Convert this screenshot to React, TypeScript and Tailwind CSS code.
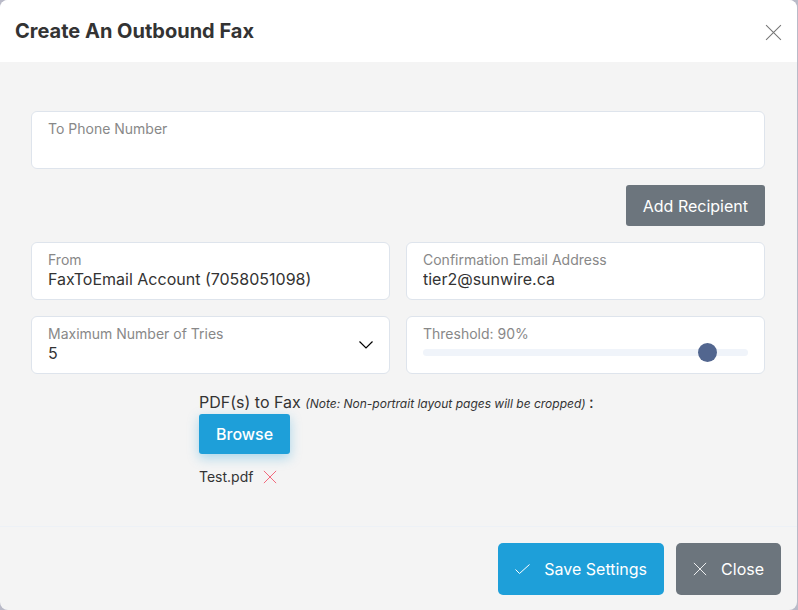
import { useState } from "react";
import type { ReactNode } from "react";

type FieldProps = {
  id: string;
  label: string;
  children: ReactNode;
};

function Field({ id, label, children }: FieldProps) {
  return (
    <div className="relative rounded-md border border-[#dee4ec] bg-white px-4 pt-2 pb-2.5">
      <label htmlFor={id} className="block text-sm leading-[18px] text-[#888888]">
        {label}
      </label>
      {children}
    </div>
  );
}

function CrossIcon({ className }: { className: string }) {
  return (
    <svg viewBox="0 0 16 16" fill="none" stroke="currentColor" className={className}>
      <path d="M1 1l14 14M15 1L1 15" />
    </svg>
  );
}

export default function App() {
  const [phone, setPhone] = useState("");
  const [from, setFrom] = useState("FaxToEmail Account (7058051098)");
  const [email, setEmail] = useState("tier2@sunwire.ca");
  const [tries, setTries] = useState("5");
  const [threshold, setThreshold] = useState(90);
  const [files, setFiles] = useState(["Test.pdf"]);

  const inputStyle =
    "block h-5 w-full bg-transparent text-base leading-5 text-[#333333] outline-none";

  return (
    <div className="min-h-screen bg-[#b9bac8] pr-px font-['Inter',sans-serif] text-[#333333]">
      <div className="flex min-h-screen flex-col overflow-hidden rounded-lg bg-[#f4f4f4]">
        <header className="flex items-center justify-between bg-white px-[15px] py-4">
          <h1 className="text-xl leading-[30px] font-bold">Create An Outbound Fax</h1>
          <button type="button" aria-label="Close dialog" className="mt-0.5 text-[#777777]">
            <CrossIcon className="size-[17px]" />
          </button>
        </header>

        <main className="grow px-8 pt-[49px] pb-8 pl-[31px]">
          <Field id="phone" label="To Phone Number">
            <input
              id="phone"
              value={phone}
              onChange={(e) => setPhone(e.target.value)}
              className={inputStyle}
            />
          </Field>

          <div className="my-4 flex justify-end">
            <button
              type="button"
              className="h-[41px] rounded-[3px] bg-[#6c757d] px-[17px] text-base text-white"
            >
              Add Recipient
            </button>
          </div>

          <div className="grid grid-cols-2 gap-4">
            <Field id="from" label="From">
              <input
                id="from"
                value={from}
                onChange={(e) => setFrom(e.target.value)}
                className={inputStyle}
              />
            </Field>
            <Field id="email" label="Confirmation Email Address">
              <input
                id="email"
                value={email}
                onChange={(e) => setEmail(e.target.value)}
                className={inputStyle}
              />
            </Field>
            <Field id="tries" label="Maximum Number of Tries">
              <select
                id="tries"
                value={tries}
                onChange={(e) => setTries(e.target.value)}
                className="block h-5 w-full appearance-none bg-transparent text-base leading-5 outline-none"
              >
                {["1", "2", "3", "4", "5"].map((n) => (
                  <option key={n}>{n}</option>
                ))}
              </select>
              <svg
                viewBox="0 0 14 8"
                fill="none"
                stroke="black"
                strokeWidth="1.2"
                className="pointer-events-none absolute inset-y-0 right-4 my-auto h-2 w-3.5"
              >
                <path d="M.5 .5L7 7L13.5 .5" />
              </svg>
            </Field>
            <Field id="threshold" label={`Threshold: ${threshold}%`}>
              <input
                id="threshold"
                type="range"
                value={threshold}
                onChange={(e) => setThreshold(Number(e.target.value))}
                className="block h-[19px] w-full appearance-none bg-transparent outline-none [&::-webkit-slider-runnable-track]:h-[7px] [&::-webkit-slider-runnable-track]:rounded-full [&::-webkit-slider-runnable-track]:bg-[#f0f4fa] [&::-webkit-slider-thumb]:-mt-1.5 [&::-webkit-slider-thumb]:size-[19px] [&::-webkit-slider-thumb]:appearance-none [&::-webkit-slider-thumb]:rounded-full [&::-webkit-slider-thumb]:bg-[#52668f]"
              />
            </Field>
          </div>

          <div className="mx-auto mt-4 w-[398px]">
            <p className="text-base leading-6 whitespace-nowrap">
              PDF(s) to Fax <em className="text-xs">(Note: Non-portrait layout pages will be cropped) </em>
              :
            </p>
            <button
              type="button"
              className="block h-10 rounded-[3px] bg-[#1e9fd9] px-[17px] text-base font-medium text-white shadow-[0_4px_12px_rgba(30,159,217,0.35)]"
            >
              Browse
            </button>
            <ul className="mt-3">
              {files.map((file) => (
                <li key={file} className="flex items-center gap-2.5 text-sm leading-[22px]">
                  {file}
                  <button
                    type="button"
                    aria-label={`Remove ${file}`}
                    onClick={() => setFiles(files.filter((f) => f !== file))}
                    className="text-[#f1556c]"
                  >
                    <CrossIcon className="size-3.5" />
                  </button>
                </li>
              ))}
            </ul>
          </div>
        </main>

        <footer className="flex justify-end gap-3 border-t border-[#edf1f6] px-4 pt-4 pb-[15px]">
          <button
            type="button"
            className="flex h-[52px] items-center gap-3.5 rounded-[5px] bg-[#1e9fd9] px-[17px] text-base text-white"
          >
            <svg viewBox="0 0 15 10" fill="none" stroke="currentColor" className="h-2.5 w-[15px]">
              <path d="M.5 5.5L4.5 9.5L14.5 .5" />
            </svg>
            Save Settings
          </button>
          <button
            type="button"
            className="flex h-[52px] items-center gap-3.5 rounded-[5px] bg-[#6c757d] px-[17px] text-base text-white"
          >
            <CrossIcon className="size-3.5" />
            Close
          </button>
        </footer>
      </div>
    </div>
  );
}
